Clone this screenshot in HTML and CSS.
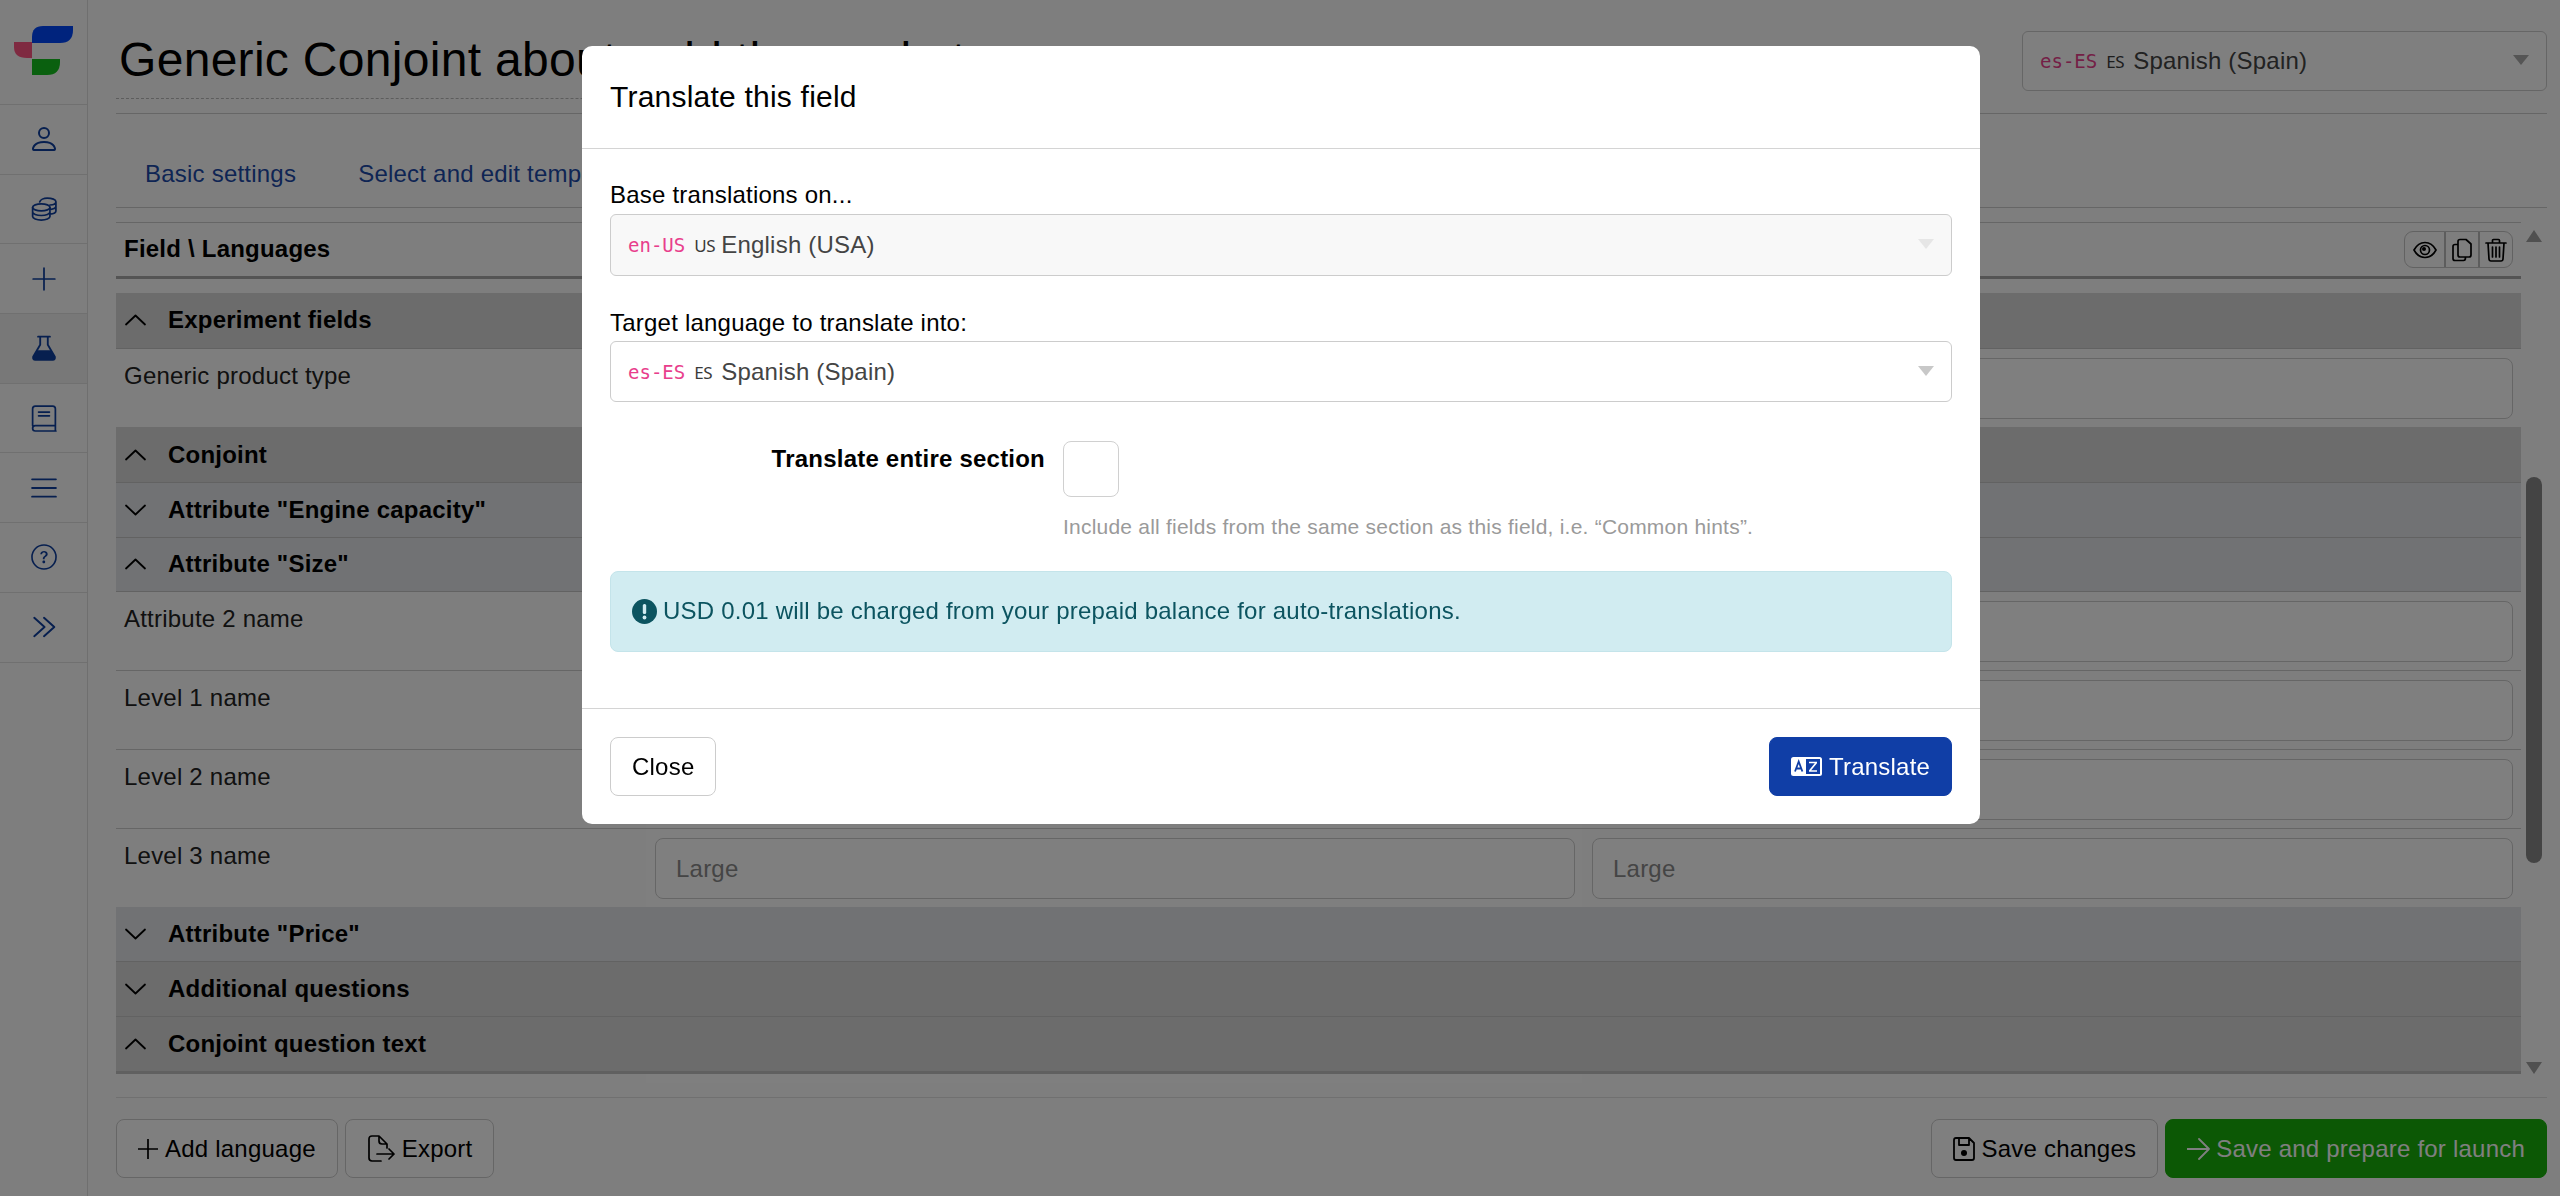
FILE: index.html
```html
<!DOCTYPE html>
<html lang="en">
<head>
<meta charset="utf-8">
<title>Translate this field</title>
<link rel="stylesheet" href="styles.css">
</head>
<body>
<div class="app">
  <aside class="sidebar">
    <div class="logo">
      <svg viewBox="0 0 88 105" width="88" height="105"><path class="logo-blue" d="M32 43V37Q32 26 43 26H73V30Q73 43 60 43Z"/><path class="logo-red" d="M14 42H32V58H27Q14 58 14 47Z"/><path class="logo-green" d="M32 59H60V62Q60 75 47 75H32Z"/></svg>
    </div>
    <a class="nav-item"><svg class="nav-icon nav-icon-lg" viewBox="0 0 16 16"><path class="fill" d="M8 8a3 3 0 1 0 0-6 3 3 0 0 0 0 6Zm2-3a2 2 0 1 1-4 0 2 2 0 0 1 4 0Zm4 8c0 1-1 1-1 1H3s-1 0-1-1 1-4 6-4 6 3 6 4Zm-1-.004c-.001-.246-.154-.986-.832-1.664C11.516 10.68 10.289 10 8 10c-2.29 0-3.516.68-4.168 1.332-.678.678-.83 1.418-.832 1.664h10Z"/></svg></a>
    <a class="nav-item"><svg class="nav-icon" viewBox="0 0 24 24"><g class="line" stroke-width="1.600"><ellipse cx="9.500" cy="10.500" rx="8" ry="3.200"/><path d="M1.500 10.500v8.500c0 1.800 3.600 3.200 8 3.200s8-1.400 8-3.200v-8.500M1.500 14.800c0 1.800 3.600 3.200 8 3.200s8-1.400 8-3.200M8 5.500c.6-1.900 3.700-3.500 7-3.500 4.400 0 8 1.400 8 3.200s-2.300 2.900-5.500 3.100M23 5.200v8.600c0 1.500-2.400 2.700-5.500 3M23 9.500c0 1.500-2.400 2.700-5.500 3"/></g></svg></a>
    <a class="nav-item"><svg class="nav-icon" viewBox="0 0 24 24"><path class="line" stroke-width="1.600" d="M12 2V22M2 12H22"/></svg></a>
    <a class="nav-item active"><svg class="nav-icon" viewBox="0 0 24 24"><path class="line" stroke-width="1.700" d="M6.500 1.500H17.500M8.500 1.500V9L2 20Q1.500 23 4 23H20Q22.500 23 22 20L15.500 9V1.500"/><path class="fill" d="M5.500 14H18.500L22 20Q22.500 23 20 23H4Q1.500 23 2 20Z"/></svg></a>
    <a class="nav-item"><svg class="nav-icon" viewBox="0 0 24 24"><g class="line" stroke-width="1.600"><path d="M1.500 19V3.500Q1.500 1 4 1H20Q22.500 1 22.500 3.500V19H4Q1.500 19 1.500 21.500T4 24H23M22.500 19V24"/><path d="M7 6.500H17M7 10H17"/></g></svg></a>
    <a class="nav-item"><svg class="nav-icon" viewBox="0 0 24 24"><path class="line" stroke-width="1.700" d="M1 4H23M1 12H23M1 20H23"/></svg></a>
    <a class="nav-item"><svg class="nav-icon" viewBox="0 0 16 16"><circle class="line" cx="8" cy="8" r="7.400" stroke-width="1"/><path class="fill" transform="translate(1.300 1.300) scale(.84)" d="M5.255 5.786a.237.237 0 0 0 .241.247h.825c.138 0 .248-.113.266-.25.09-.656.54-1.134 1.342-1.134.686 0 1.314.343 1.314 1.168 0 .635-.374.927-.965 1.371-.673.489-1.206 1.06-1.168 1.987l.003.217a.25.25 0 0 0 .25.246h.811a.25.25 0 0 0 .25-.25v-.105c0-.718.273-.927 1.01-1.486.609-.463 1.244-.977 1.244-2.056 0-1.511-1.276-2.241-2.673-2.241-1.267 0-2.655.59-2.75 2.286zm1.557 5.763c0 .533.425.927 1.01.927.609 0 1.028-.394 1.028-.927 0-.552-.42-.94-1.029-.94-.584 0-1.009.388-1.009.94z"/></svg></a>
    <a class="nav-item"><svg class="nav-icon" viewBox="0 0 24 24"><path class="line" stroke-width="1.800" d="M3 3.500L12.500 12L3 20.500M12 3.500L21.500 12L12 20.500"/></svg></a>
  </aside>

  <main class="main">
    <header class="topbar">
      <h1 class="page-title">Generic Conjoint about gold the market</h1>
      <div class="select select-top">
        <code class="lang-code">es-ES</code><span class="flag">ES</span><span>Spanish (Spain)</span><i class="caret caret-dim"></i>
      </div>
    </header>
    <nav class="tabs">
      <a class="tab">Basic settings</a>
      <a class="tab">Select and edit templates</a>
    </nav>

    <section class="editor">
      <div class="table">
        <div class="head-row">
          <strong>Field \ Languages</strong>
          <div class="tool-group">
            <button class="tool"><svg viewBox="0 0 24 24" width="24" height="24"><path class="ink" stroke-width="1.700" d="M1 12C4 6.500 7.500 4.500 12 4.500S20 6.500 23 12C20 17.500 16.500 19.500 12 19.500S4 17.500 1 12Z"/><circle class="ink" cx="12" cy="12" r="4.500" stroke-width="1.700"/><circle class="ink-fill" cx="11" cy="11" r="2"/></svg></button>
            <button class="tool"><svg viewBox="0 0 24 24" width="24" height="24"><path class="ink" stroke-width="1.700" d="M8 3.500Q8 1.500 10 1.500H16L21 6V17Q21 19 19 19H10Q8 19 8 17ZM8 6.500H5Q3 6.500 3 8.500V20.500Q3 22.500 5 22.500H13.500Q15.500 22.500 15.500 19.500"/></svg></button>
            <button class="tool"><svg viewBox="0 0 24 24" width="24" height="24"><path class="ink" stroke-width="1.700" d="M2 5H22M8.500 5V2.500Q8.500 1.500 9.500 1.500H14.500Q15.500 1.500 15.500 2.500V5M4 5L5 21Q5.200 23 7 23H17Q18.800 23 19 21L20 5M8.500 9V19M12 9V19M15.500 9V19"/></svg></button>
          </div>
        </div>

        <div class="sec sec-main sec-first"><svg class="chev" viewBox="0 0 21 12"><path class="ink" stroke-width="1.800" d="M1 10.500L10.500 1.500L20 10.500"/></svg><strong>Experiment fields</strong></div>
        <div class="row"><div class="cell-label">Generic product type</div><div class="cell cell-a"><input class="input" placeholder=""></div><div class="cell"><input class="input" placeholder=""></div></div>

        <div class="sec sec-main"><svg class="chev" viewBox="0 0 21 12"><path class="ink" stroke-width="1.800" d="M1 10.500L10.500 1.500L20 10.500"/></svg><strong>Conjoint</strong></div>
        <div class="sec sec-sub"><svg class="chev" viewBox="0 0 21 12"><path class="ink" stroke-width="1.800" d="M1 1.500L10.500 10.500L20 1.500"/></svg><strong>Attribute "Engine capacity"</strong></div>
        <div class="sec sec-sub"><svg class="chev" viewBox="0 0 21 12"><path class="ink" stroke-width="1.800" d="M1 10.500L10.500 1.500L20 10.500"/></svg><strong>Attribute "Size"</strong></div>
        <div class="row"><div class="cell-label">Attribute 2 name</div><div class="cell cell-a"><input class="input"></div><div class="cell"><input class="input"></div></div>
        <div class="row"><div class="cell-label">Level 1 name</div><div class="cell cell-a"><input class="input"></div><div class="cell"><input class="input"></div></div>
        <div class="row"><div class="cell-label">Level 2 name</div><div class="cell cell-a"><input class="input"></div><div class="cell"><input class="input"></div></div>
        <div class="row row-last"><div class="cell-label">Level 3 name</div><div class="cell cell-a"><input class="input" placeholder="Large"></div><div class="cell"><input class="input" placeholder="Large"></div></div>
        <div class="sec sec-sub"><svg class="chev" viewBox="0 0 21 12"><path class="ink" stroke-width="1.800" d="M1 1.500L10.500 10.500L20 1.500"/></svg><strong>Attribute "Price"</strong></div>
        <div class="sec sec-main sec-tight"><svg class="chev" viewBox="0 0 21 12"><path class="ink" stroke-width="1.800" d="M1 1.500L10.500 10.500L20 1.500"/></svg><strong>Additional questions</strong></div>
        <div class="sec sec-main sec-end"><svg class="chev" viewBox="0 0 21 12"><path class="ink" stroke-width="1.800" d="M1 10.500L10.500 1.500L20 10.500"/></svg><strong>Conjoint question text</strong></div>
        <div class="tail"><div></div><div class="cell-a"></div><div></div></div>
      </div>
      <div class="scrollbar">
        <i class="arrow-up"></i>
        <i class="thumb"></i>
        <i class="arrow-down"></i>
      </div>
    </section>

    <footer class="actions">
      <div class="action-group action-left">
        <button class="btn"><svg viewBox="0 0 20 20" width="20" height="20"><path class="ink" stroke-width="1.700" d="M10 0V20M0 10H20"/></svg>Add language</button>
        <button class="btn"><svg viewBox="0 0 28 28" width="28" height="28"><path class="ink" stroke-width="1.700" d="M14 26H5Q2 26 2 23V4Q2 1 5 1H12L20 9V13M12 1V6Q12 9 15 9H20M10 19H27M22 14L27 19L22 24"/></svg>Export</button>
      </div>
      <div class="action-group">
        <button class="btn"><svg viewBox="0 0 22 24" width="22" height="24"><path class="ink" stroke-width="1.800" d="M1 3Q1 1 3 1H16L21 6V21Q21 23 19 23H3Q1 23 1 21ZM6 1V8H16V1"/><circle class="ink-fill" cx="11" cy="16" r="3"/></svg>Save changes</button>
        <button class="btn btn-go"><svg viewBox="0 0 23 22" width="23" height="22"><path class="ink-white" stroke-width="1.800" d="M0 11H22M12 1L22 11L12 21"/></svg>Save and prepare for launch</button>
      </div>
    </footer>
  </main>
</div>

<div class="overlay">
  <div class="modal">
    <div class="modal-head">Translate this field</div>
    <div class="modal-body">
      <label class="field-label">Base translations on...</label>
      <div class="select select-off">
        <code class="lang-code">en-US</code><span class="flag">US</span><span>English (USA)</span><i class="caret caret-off"></i>
      </div>
      <label class="field-label field-label-next">Target language to translate into:</label>
      <div class="select select-target">
        <code class="lang-code">es-ES</code><span class="flag">ES</span><span>Spanish (Spain)</span><i class="caret"></i>
      </div>
      <div class="check-row">
        <label class="check-label">Translate entire section</label>
        <input class="check" type="checkbox">
      </div>
      <p class="hint">Include all fields from the same section as this field, i.e. “Common hints”.</p>
      <div class="alert">
        <svg viewBox="0 0 25 25" width="25" height="25"><circle class="alert-dot" cx="12.500" cy="12.500" r="12.500"/><rect class="alert-mark" x="10.800" y="5" width="3.400" height="10" rx="1.500"/><circle class="alert-mark" cx="12.500" cy="18.500" r="1.900"/></svg>
        <span class="alert-text">USD 0.01 will be charged from your prepaid balance for auto-translations.</span>
      </div>
    </div>
    <div class="modal-foot">
      <button class="btn btn-close">Close</button>
      <button class="btn btn-primary"><svg viewBox="0 0 31 19" width="31" height="19"><rect class="tr-white" width="31" height="19" rx="2.500"/><rect class="tr-blue" x="15" y="2" width="14" height="15"/><path class="tr-stroke" stroke-width="1.800" d="M4 14.500L7.700 4.500L11.400 14.500M5.200 11.500H10.200"/><path class="tr-stroke-white" stroke-width="1.700" d="M18 5.500H26M25.500 5.500L18.500 14M18 14H26"/></svg>Translate</button>
    </div>
  </div>
</div>
</body>
</html>
```
FILE: styles.css
```css
* { box-sizing: border-box; }
html, body { margin: 0; height: 1196px; overflow: hidden; }
body {
  background: #fdfdfd;
  color: #000;
  font-family: "Liberation Sans", Arial, sans-serif;
  font-size: 24px;
  line-height: 36px;
  letter-spacing: .22px;
}
.app { display: flex; height: 1196px; }

/* Sidebar */
.sidebar { width: 88px; flex: none; border-right: 1px solid #dedede; }
.logo { height: 105px; border-bottom: 1px solid #e0e0e0; }
.logo svg { display: block; }
.logo-blue { fill: #0047fb; }
.logo-red { fill: #ff5482; }
.logo-green { fill: #14c01e; }
.nav-item {
  display: flex; align-items: center; justify-content: center;
  height: 69.700px; border-bottom: 1px solid #e0e0e0;
}
.nav-item.active { background: #f0f0f0; }
.nav-icon { width: 26px; height: 26px; overflow: visible; }
.nav-icon-lg { width: 32px; height: 32px; }
.fill { fill: #0e3f9f; }
.line { fill: none; stroke: #0e3f9f; stroke-linecap: round; stroke-linejoin: round; }

/* Main */
.main { flex: 1; min-width: 0; display: flex; flex-direction: column; padding: 0 13px 0 28px; }
.topbar { height: 114px; flex: none; display: flex; align-items: flex-start; border-bottom: 1px solid #ccc; }
.page-title {
  flex: 1; margin: 0 60px 0 0; padding: 24px 0 2px 3px; height: 99px;
  font-size: 48px; line-height: 72px; font-weight: 400; letter-spacing: .3px; white-space: nowrap; overflow: hidden;
  border-bottom: 1px dashed #bbb;
}
.select {
  position: relative; display: flex; align-items: center; padding-left: 17px;
  border: 1px solid #ccc; border-radius: 6px; background: #fff; color: #444;
  white-space: nowrap;
}
.select-top { width: 525px; height: 60px; margin-top: 31px; }
.lang-code { font-family: "DejaVu Sans Mono", "Liberation Mono", monospace; font-size: 19px; letter-spacing: 0; color: #e83e8c; }
.flag { width: 27px; font-family: "Noto Sans", sans-serif; font-size: 17px; letter-spacing: -.5px; color: #3a3a3a; margin: 2px 0 0 9px; }
.caret {
  position: absolute; right: 17px; top: 50%; margin-top: -6px; width: 0; height: 0;
  border-style: solid; border-width: 10px 8px 0; border-color: #c8c8c8 transparent transparent;
}
.caret-dim { border-top-color: #aaa; }
.caret-off { border-top-color: #e6e6e6; }

.tabs { height: 94px; flex: none; display: flex; gap: 4px; border-bottom: 1px solid #ccc; padding-top: 42px; }
.tab { padding: 0 29px; color: #1d4aa8; line-height: 36px; white-space: nowrap; }

/* Editor */
.editor { flex: none; height: 861px; margin-top: 14px; display: flex; overflow: hidden; }
.table { width: 2405px; flex: none; display: flex; flex-direction: column; }
.head-row {
  height: 57px; flex: none; margin-bottom: 14px; padding: 0 8px;
  display: flex; align-items: center; justify-content: space-between;
  border-top: 1px solid #ccc; border-bottom: 3px solid #a8a8a8;
}
.head-row strong { line-height: 48px; margin-top: -2px; }
.tool-group { display: flex; height: 37px; border: 1px solid #c4c4c4; border-radius: 9px; overflow: hidden; }
.tool {
  display: flex; align-items: center; justify-content: center; width: 34px; padding: 0;
  background: none; border: 0; border-left: 2px solid #bbb;
}
.tool:first-child { width: 39px; border-left: 0; }
.tool:last-child { width: 34px; }
.ink { fill: none; stroke: #000; stroke-linecap: round; stroke-linejoin: round; }
.ink-fill { fill: #000; }
.ink-white { fill: none; stroke: #fff; stroke-linecap: round; stroke-linejoin: round; }

.sec {
  flex: none; display: flex; align-items: center; gap: 22px; padding-left: 9px;
  border-bottom: 1px solid #c4c4c4;
}
.sec strong { white-space: nowrap; }
.chev { width: 21px; height: 12px; flex: none; overflow: visible; }
.sec-main { height: 56px; background: #d8d8d8; }
.sec-first { padding-bottom: 2px; }
.sec-sub { height: 54.500px; background: #e2e5e8; }
.sec-tight { height: 55px; }
.sec-end { height: 57px; border-bottom: 3px solid #c0c0c0; }

.row { height: 78px; flex: none; display: grid; grid-template-columns: 530px 936px 939px; }
.row + .row { height: 79px; border-top: 1px solid #ccc; }
.row-last { height: 79px; }
.cell-label { padding: 9px 8px 0; color: #222; }
.cell { padding: 9px 8px 0 10px; }
.cell-a { padding-left: 9px; padding-right: 7px; background: #fff; }
.input {
  display: block; width: 100%; height: 61px; padding: 0 20px; background: #fff;
  border: 1px solid #ccc; border-radius: 8px; font: inherit; letter-spacing: inherit; color: #444;
}
.input::placeholder { color: #8a8a8a; opacity: 1; }
.tail { flex: 1; display: grid; grid-template-columns: 530px 936px 939px; }

/* Scrollbar */
.scrollbar { width: 26px; flex: none; display: flex; flex-direction: column; align-items: center; padding: 8px 5px 9px; }
.arrow-up, .arrow-down { width: 0; height: 0; border-style: solid; border-color: transparent; }
.arrow-up { border-width: 0 8px 12px; border-bottom-color: #a0a0a0; }
.arrow-down { border-width: 12px 8px 0; border-top-color: #a0a0a0; margin-top: auto; }
.thumb { width: 16px; height: 386px; margin-top: 235px; background: #888; border-radius: 8px; }

/* Footer actions */
.actions {
  flex: none; margin-top: 14px; padding-top: 21px; border-top: 1px solid #e0e0e0;
  display: flex; justify-content: space-between;
}
.action-group { display: flex; gap: 7px; }
.btn {
  display: inline-flex; align-items: center; gap: 6px; height: 59px; padding: 0 21px;
  font: inherit; letter-spacing: inherit; background: #fff; color: #000; border: 1px solid #ccc; border-radius: 8px; white-space: nowrap;
}
.action-left .btn { gap: 7px; }
.btn-go { background: #18b00a; border-color: #18b00a; color: #fff; }

/* Modal */
.overlay {
  position: fixed; inset: 0; background: rgba(0, 0, 0, .5);
  display: flex; justify-content: center; align-items: flex-start; padding: 46px 0 0 2px;
}
.modal { width: 1398px; height: 778px; background: #fff; border-radius: 10px; display: flex; flex-direction: column; }
.modal-head { height: 103px; flex: none; padding: 33px 28px 0; font-size: 30px; line-height: 36px; border-bottom: 1px solid #d4d4d4; }
.modal-body { flex: 1; padding: 28px 28px 0; }
.field-label { display: block; line-height: 36px; }
.field-label-next { margin-top: 29px; }
.select-off { height: 62px; margin-top: 1px; background: #f8f8f8; }
.select-target { height: 61px; }
.check-row { display: grid; grid-template-columns: 435px 56px; column-gap: 18px; margin-top: 39px; }
.check-label { font-weight: 700; text-align: right; }
.check { appearance: none; width: 56px; height: 56px; margin: 0; background: #fff; border: 1px solid #d0d0d0; border-radius: 8px; }
.hint { margin: 14px 0 0 453px; font-size: 21px; line-height: 32px; color: #9a9a9a; white-space: nowrap; }
.alert {
  display: flex; align-items: center; gap: 6px; height: 81px; margin-top: 28px; padding-left: 21px;
  background: #d1ecf1; border: 1px solid #c4e4ea; border-radius: 8px; color: #0c5460;
}
.alert svg { flex: none; }
.alert-text { margin-top: -2px; }
.alert-dot { fill: #0c5460; }
.alert-mark { fill: #d1ecf1; }
.modal-foot {
  height: 116px; flex: none; display: flex; justify-content: space-between; padding: 28px 28px 0;
  border-top: 1px solid #d4d4d4;
}
.btn-close { padding: 0 21px; }
.btn-primary { width: 183px; padding: 0 0 0 21px; gap: 7px; background: #103ea6; border-color: #103ea6; color: #fff; }
.tr-white { fill: #fff; }
.tr-blue { fill: #103ea6; }
.tr-stroke { fill: none; stroke: #103ea6; }
.tr-stroke-white { fill: none; stroke: #fff; }
```
